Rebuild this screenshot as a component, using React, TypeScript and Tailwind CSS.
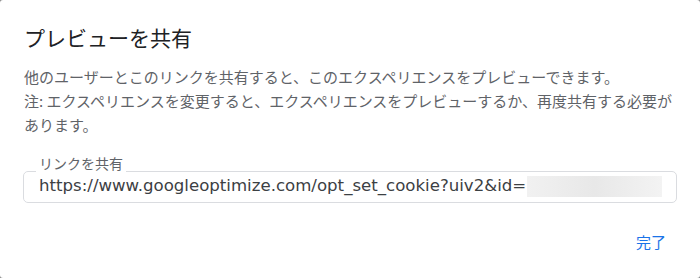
import React from "react";

const jp = { fontFamily: '"Noto Sans CJK JP", "Noto Sans", sans-serif' };

export default function App() {
  return (
    <div className="w-[700px] h-[278px] bg-[#8a8a8a]">
      <div
        className="w-full h-full bg-white rounded-[3px] flex flex-col px-6 pt-[21px]"
        style={jp}
      >
        <h1 className="text-[21px] leading-[32px] text-[#202124] font-normal">
          プレビューを共有
        </h1>
        <div className="mt-[12px] text-[15px] leading-[24px] text-[#5f6368]">
          <p>他のユーザーとこのリンクを共有すると、このエクスペリエンスをプレビューできます。</p>
          <p>注: エクスペリエンスを変更すると、エクスペリエンスをプレビューするか、再度共有する必要があります。</p>
        </div>
        <fieldset className="mt-[18px] -ml-px mr-[-1px] border border-[#dadce0] rounded-[5px] pl-[15px] pr-[14px] pb-[5px]">
          <legend className="px-[3px] -ml-[3px] text-[14px] leading-[16px] pb-[16px] text-[#5f6368]">
            リンクを共有
          </legend>
          <div className="flex items-center h-[22px] -mt-[12px]">
            <span
              className="text-[16.6px] text-[#3c4043] whitespace-nowrap"
              style={{ fontFamily: '"DejaVu Sans", sans-serif' }}
            >
              https://www.googleoptimize.com/opt_set_cookie?uiv2&amp;id=
            </span>
            <span className="ml-[1px] h-[21px] flex-1 bg-gradient-to-r from-[#f1f1f1] via-[#e8e8e8] to-[#f3f3f3]" />
          </div>
        </fieldset>
        <div className="flex justify-end mt-[27px]">
          <button className="px-[10px] text-[15px] leading-[24px] text-[#1a73e8]">完了</button>
        </div>
      </div>
    </div>
  );
}
